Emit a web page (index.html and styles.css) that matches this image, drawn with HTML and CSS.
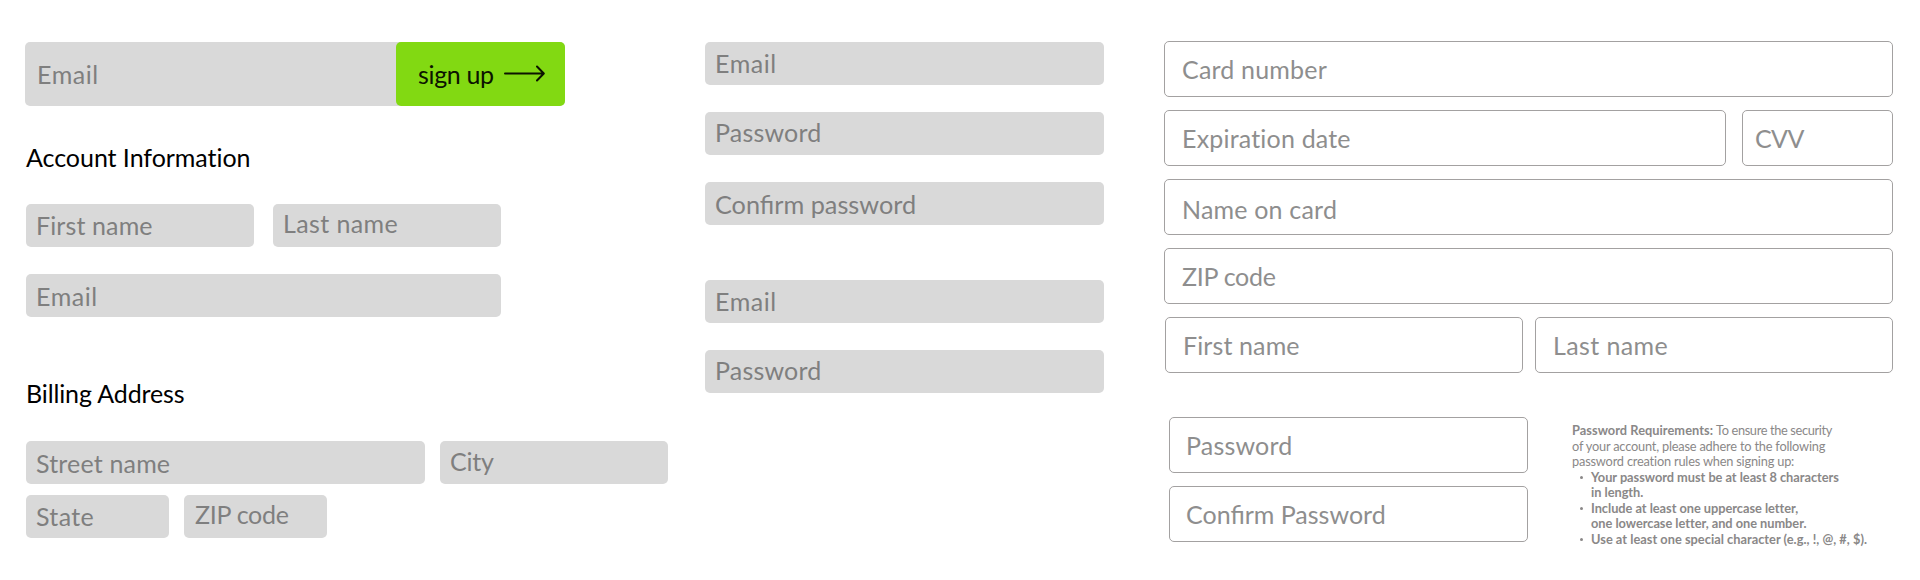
FILE: index.html
```
<!DOCTYPE html>
<html lang="en">
<head>
<meta charset="utf-8">
<title>Form fields</title>
<link rel="stylesheet" href="styles.css">
</head>
<body>
<main class="board">
  <section class="account">
    <div class="signup">
      <div class="signup-email t56">Email</div>
      <div class="signup-button"><span class="signup-label">sign up</span>
        <svg class="arrow" width="42" height="17" viewBox="0 0 42 17" fill="none" stroke="#0c1400" stroke-width="2" stroke-linecap="round" stroke-linejoin="round"><path d="M1 8.5H39.5M33 1.5L39.8 8.5L33 15.5"/></svg>
      </div>
    </div>
    <h2 class="title title-account">Account Information</h2>
    <div class="row row-name">
      <div class="field half p5 t12">First name</div>
      <div class="field half p3 t39">Last name</div>
    </div>
    <div class="field email p6 t56">Email</div>
    <h2 class="title title-billing">Billing Address</h2>
    <div class="row row-street">
      <div class="field street p6 t17">Street name</div>
      <div class="field half p4 tcity">City</div>
    </div>
    <div class="row row-state">
      <div class="field state p5 t37">State</div>
      <div class="field zip p3 tzip">ZIP code</div>
    </div>
  </section>

  <section class="login">
    <div class="field p5 t56">Email</div>
    <div class="field p4 t19">Password</div>
    <div class="field p6 tconfirm">Confirm password</div>
    <div class="field second p5 t56">Email</div>
    <div class="field p4 t19">Password</div>
  </section>

  <section class="payment">
    <div class="box t19">Card number</div>
    <div class="row row-expiry">
      <div class="box expiry t19">Expiration date</div>
      <div class="box cvv">CVV</div>
    </div>
    <div class="box low t19">Name on card</div>
    <div class="box tzip">ZIP code</div>
    <div class="row row-holder">
      <div class="box t12">First name</div>
      <div class="box t39">Last name</div>
    </div>
    <div class="security">
      <div class="passwords">
        <div class="box t19">Password</div>
        <div class="box">Confirm Password</div>
      </div>
      <div class="rules">
        <p class="intro"><b>Password Requirements:</b> <span class="tight">To ensure the security</span><br>of your account, please adhere to the following<br>password creation rules when signing up:</p>
        <ul class="list">
          <li class="rule">Your password must be at least 8 characters<br>in length.</li>
          <li class="rule">Include at least one uppercase letter,<br>one lowercase letter, and one number.</li>
          <li class="rule last">Use at least one special character (e.g., !, @, #, $).</li>
        </ul>
      </div>
    </div>
  </section>
</main>
</body>
</html>
```
FILE: styles.css
```
* { box-sizing: border-box; }

body {
  margin: 0;
  background: #fff;
  font: 25px/30px Lato, sans-serif;
  color: #7f7f7f;
}

.board {
  display: grid;
  grid-template-columns: 643px 399px 729px;
  column-gap: 37px;
  height: 580px;
  padding: 41px 0 0 25px;
  overflow: hidden;
  white-space: nowrap;
}

.row { display: flex; }

/* Filled fields */
.field {
  height: 43px;
  padding-left: 10px;
  border-radius: 5px;
  background: #d9d9d9;
}

.p3 { padding-top: 4px; }
.p4 { padding-top: 5px; }
.p5 { padding-top: 6px; }
.p6 { padding-top: 7px; }

/* Tracking per label */
.t12 { letter-spacing: 0.12px; }
.t17 { letter-spacing: 0.17px; }
.t19 { letter-spacing: 0.19px; }
.t37 { letter-spacing: 0.37px; }
.t39 { letter-spacing: 0.39px; }
.t56 { letter-spacing: 0.56px; }
.tcity { letter-spacing: -0.22px; }
.tzip { letter-spacing: -0.28px; }
.tconfirm { font-size: 25.25px; }

/* Account and billing */
.account { padding-top: 1px; }

.signup {
  display: flex;
  width: 540px;
  height: 64px;
  border-radius: 5px;
  background: #d9d9d9;
}

.signup-email {
  width: 371px;
  padding: 17px 0 0 12px;
}

.signup-button {
  display: flex;
  align-items: flex-start;
  width: 169px;
  padding: 17px 0 0 22px;
  border-radius: 5px;
  background: #82d912;
  color: #0c1400;
}

.signup-label {
  width: 86px;
  letter-spacing: -0.35px;
}

.arrow { margin-top: 6px; }

.title {
  margin: 0 0 0 1px;
  font-size: 25px;
  font-weight: 400;
  color: #000;
}

.title-account { margin-top: 36px; letter-spacing: -0.05px; }
.title-billing { margin-top: 61px; letter-spacing: -0.12px; }

.row-name { gap: 19px; margin: 32px 0 27px 1px; }
.half { width: 228px; }
.email { width: 475px; margin-left: 1px; }
.row-street { gap: 15px; margin: 33px 0 11px 1px; }
.street { width: 399px; }
.row-state { gap: 15px; margin-left: 1px; }
.state { width: 143px; }
.zip { width: 143px; padding-left: 11px; }

/* Login */
.login {
  display: flex;
  flex-direction: column;
  gap: 27px;
  padding-top: 1px;
}

.second { margin-top: 28px; }

/* Payment */
.payment {
  display: flex;
  flex-direction: column;
  gap: 13px;
  width: 729px;
  margin-left: 23px;
  color: #8e8e8e;
}

.box {
  height: 56px;
  padding: 12px 0 0 17px;
  border: 1px solid #a3a1a1;
  border-radius: 5px;
}

.low { padding-top: 14px; }
.row-expiry { gap: 16px; }
.expiry { width: 562px; }
.cvv { width: 151px; padding-left: 12px; letter-spacing: -0.61px; }
.row-holder { gap: 12px; margin-left: 1px; }
.row-holder .box { width: 358px; }

.security {
  display: flex;
  gap: 44px;
  margin: 31px 0 0 5px;
}

.passwords {
  display: flex;
  flex-direction: column;
  gap: 13px;
  width: 359px;
}

.passwords .box { padding-left: 16px; }

.rules {
  padding-top: 6px;
  font-size: 12.8px;
  line-height: 15.5px;
  color: #8a8888;
}

.intro { margin: 0; letter-spacing: -0.2px; }
.intro b { letter-spacing: 0.04px; }
.tight { letter-spacing: -0.36px; }

.list {
  margin: 0;
  padding: 0 0 0 19px;
  list-style: none;
  font-weight: 700;
}

.rule { letter-spacing: -0.03px; }
.rule::before {
  content: "";
  float: left;
  width: 3px;
  height: 3px;
  margin: 6px 0 0 -11px;
  border-radius: 50%;
  background: #8a8888;
}
.last { letter-spacing: 0.02px; }
```
